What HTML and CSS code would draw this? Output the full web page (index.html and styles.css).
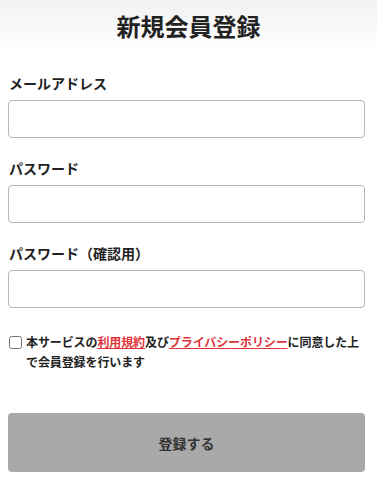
FILE: index.html
```html
<!DOCTYPE html>
<html lang="ja">
<head>
<meta charset="utf-8">
<link rel="stylesheet" href="styles.css">
</head>
<body>
<header class="header"><h1 class="title">新規会員登録</h1></header>
<form class="form">
  <div class="field">
    <label class="label">メールアドレス</label>
    <input class="input" type="email">
  </div>
  <div class="field">
    <label class="label">パスワード</label>
    <input class="input" type="password">
  </div>
  <div class="field">
    <label class="label">パスワード（確認用）</label>
    <input class="input" type="password">
  </div>
  <div class="agree">
    <input class="check" type="checkbox">
    <p class="agree-text">本サービスの<a class="link" href="#">利用規約</a>及び<a class="link" href="#">プライバシーポリシー</a>に同意した上で会員登録を行います</p>
  </div>
  <button class="submit" type="button">登録する</button>
</form>
</body>
</html>
```
FILE: styles.css
```css
html, body {
  margin: 0;
  padding: 0;
  background: #fff;
}
body {
  font-family: "Noto Sans CJK JP", "Noto Sans", sans-serif;
  color: #222;
}
.header {
  height: 52px;
  background: linear-gradient(180deg, #f1f1f1 0%, #fafafa 60%, #fff 100%);
  display: flex;
  align-items: center;
  justify-content: center;
}
.title {
  margin: 0;
  font-size: 24px;
  line-height: 36px;
  font-weight: 700;
  color: #222;
}
.form {
  padding: 21px 12px 0 8px;
  display: flex;
  flex-direction: column;
}
.field {
  display: flex;
  flex-direction: column;
  margin-bottom: 20px;
}
.label {
  font-size: 14px;
  line-height: 20px;
  font-weight: 700;
  margin-left: 1px;
  margin-bottom: 7px;
}
.input {
  box-sizing: border-box;
  height: 38px;
  width: 100%;
  border: 1px solid #b5b5b5;
  border-radius: 4px;
  margin: 0;
  padding: 0 8px;
  font-size: 14px;
}
.agree {
  display: flex;
  align-items: flex-start;
  margin-top: 4px;
}
.check {
  width: 13px;
  height: 13px;
  margin: 4px 4px 0 1px;
  flex: none;
}
.agree-text {
  margin: 0;
  font-size: 12px;
  line-height: 20px;
  font-weight: 700;
  letter-spacing: -0.1px;
  color: #222;
}
.link {
  color: #e0343b;
  text-decoration: underline;
}
.submit {
  margin-top: 41px;
  height: 59px;
  width: 100%;
  border: none;
  border-radius: 4px;
  background: #a9a9a9;
  color: #333;
  font-family: inherit;
  font-size: 14px;
  font-weight: 700;
}
```
